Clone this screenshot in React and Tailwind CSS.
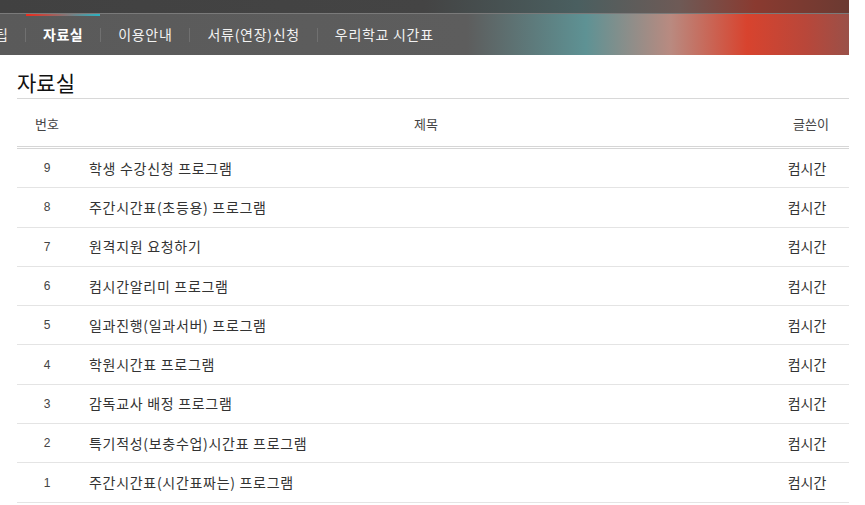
import React from 'react';

const rows = [
    { no: 9, title: '학생 수강신청 프로그램' },
    { no: 8, title: '주간시간표(초등용) 프로그램' },
    { no: 7, title: '원격지원 요청하기' },
    { no: 6, title: '컴시간알리미 프로그램' },
    { no: 5, title: '일과진행(일과서버) 프로그램' },
    { no: 4, title: '학원시간표 프로그램' },
    { no: 3, title: '감독교사 배정 프로그램' },
    { no: 2, title: '특기적성(보충수업)시간표 프로그램' },
    { no: 1, title: '주간시간표(시간표짜는) 프로그램' },
];

const menu = ['자료실', '이용안내', '서류(연장)신청', '우리학교 시간표'];

function App() {
    return (
        <div className="w-[865px] h-[505px] overflow-hidden bg-white font-['Noto_Sans_CJK_KR','Noto_Sans',sans-serif]">
            {/* Header */}
            <div className="w-[849px]">
                <div className="h-[13px] bg-[linear-gradient(90deg,#414141_0%,#444_50%,#4a5f60_68%,#6e5a56_80%,#8a3a30_89%,#6b3a32_100%)]" />
                <div className="relative h-[42px] flex items-center border-t border-[#7a7a7a] bg-[linear-gradient(90deg,#5a5a5a_0%,#5d5d5d_55%,#5e9294_69%,#b98a80_79%,#d8432e_88%,#b8473a_95%,#9a5048_100%)]">
                    <div className="absolute left-[26px] top-0 w-[74px] h-[2px] bg-[linear-gradient(90deg,#f02a1a,#29b4c4)]" />
                    <span className="text-[14px] text-[#eee] w-[8px] overflow-hidden whitespace-nowrap flex justify-end">팁</span>
                    {menu.map((m, i) => (
                        <React.Fragment key={m}>
                            <span className="mx-[17px] w-px h-[14px] bg-[#707070]" />
                            <span className={`text-[14px] text-[#f2f2f2] whitespace-nowrap ${i === 0 ? 'font-bold text-white tracking-[0.5px]' : 'tracking-[0.7px]'}`}>{m}</span>
                        </React.Fragment>
                    ))}
                </div>
            </div>

            {/* Board */}
            <div className="pl-[17px] w-[849px]">
                <h2 className="mt-[13px] text-[21px] leading-[28px] text-[#111] border-b border-[#d8d8d8] pb-[2px]">자료실</h2>
                <div className="flex items-center h-[50px] pt-[2px] text-[13px] text-[#444] border-b-[3px] border-double border-[#d6d6d6]">
                    <div className="w-[60px] text-center">번호</div>
                    <div className="flex-1 text-center pl-[6px]">제목</div>
                    <div className="w-[80px] text-center pl-[4px]">글쓴이</div>
                </div>
                {rows.map((r) => (
                    <div key={r.no} className="flex items-center h-[39.3px] border-b border-[#e4e4e4] text-[14px] text-[#333]">
                        <div className="w-[60px] text-center text-[12px] font-['Liberation_Sans',sans-serif] text-[#444]">{r.no}</div>
                        <div className="flex-1 pl-[12px] tracking-[0.7px]">{r.title}</div>
                        <div className="w-[80px] text-center pr-[4px]">컴시간</div>
                    </div>
                ))}
            </div>
        </div>
    );
}

export default App;
